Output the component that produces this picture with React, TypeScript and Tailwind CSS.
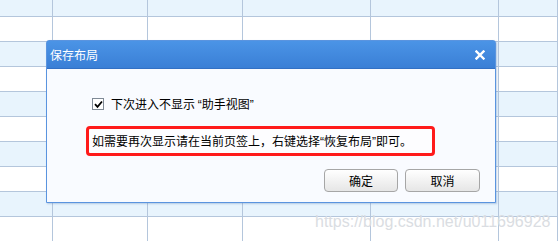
import React from 'react';

const cols = [53, 95, 95, 128, 128, 59];
const rowHeights = [17, 25, 25, 25, 25, 25, 25, 25, 25, 25];

function Grid() {
  return (
    <div className="flex flex-col">
      {rowHeights.map((h, r) => (
        <div
          key={r}
          className={`flex border-b border-[#b4c6dc] ${r % 2 === 0 ? 'bg-[#e8f4fd]' : 'bg-white'}`}
          style={{ height: h }}
        >
          {cols.map((w, c) => (
            <div key={c} className="border-r border-[#b4c6dc] shrink-0" style={{ width: w }} />
          ))}
        </div>
      ))}
    </div>
  );
}

function Checkbox() {
  return (
    <div className="w-[12px] h-[12px] border border-[#7f8a96] bg-white flex items-center justify-center">
      <svg width="9" height="9" viewBox="0 0 9 9">
        <path d="M1 4.2 L3.5 6.8 L8 1.5" fill="none" stroke="#000" strokeWidth="1.8" />
      </svg>
    </div>
  );
}

// narrow (western) quote marks, as in the original
function Q({ c }: { c: string }) {
  return <span style={{ fontFamily: '"Liberation Sans", sans-serif' }}>{c}</span>;
}

function Dialog() {
  return (
    <div className="absolute left-[46px] top-[40px] w-[450px] h-[163px] flex flex-col border border-[#5a94df] rounded-t-[3px] bg-[#f9fbff] shadow-[1px_1px_2px_rgba(80,120,180,0.35)]">
      <div className="h-[28px] shrink-0 flex items-center justify-between pl-[3px] pr-[10px] bg-gradient-to-b from-[#4b94e6] to-[#3a7fd6] border-b border-[#3270c4]">
        <span className="text-white text-[12px] leading-none">保存布局</span>
        <svg width="10" height="10" viewBox="0 0 10 10">
          <path d="M1.5 1.5 L8.5 8.5 M8.5 1.5 L1.5 8.5" stroke="#fff" strokeWidth="2.4" strokeLinecap="square" />
        </svg>
      </div>
      <div className="flex flex-col pt-[27px] pl-[39px] pr-[15px]">
        <div className="h-[16px] flex items-center gap-[7px] ml-[6px]">
          <Checkbox />
          <span className="text-[12px] text-black leading-none">
            下次进入不显示 <Q c="“" />助手视图<Q c="”" />
          </span>
        </div>
        <div className="mt-[14px] w-[349px] h-[30px] border-[3px] border-[#ff1a1a] rounded-[4px] bg-[#fdfdff] flex items-center pl-[3px]">
          <span className="text-[12px] text-black leading-none">
            如需要再次显示请在当前页签上，右键选择<Q c="“" />恢复布局<Q c="”" />即可。
          </span>
        </div>
        <div className="mt-[13px] flex justify-end gap-[7px]">
          <button className="w-[74px] h-[23px] rounded-[4px] border border-[#a6a6a6] bg-gradient-to-b from-white to-[#e6e6e6] text-[12px] text-black">
            确定
          </button>
          <button className="w-[75px] h-[23px] rounded-[4px] border border-[#a6a6a6] bg-gradient-to-b from-white to-[#e6e6e6] text-[12px] text-black">
            取消
          </button>
        </div>
      </div>
    </div>
  );
}

export default function App() {
  return (
    <div
      className="relative w-[558px] h-[241px] overflow-hidden bg-white"
      style={{ fontFamily: '"Noto Sans CJK SC", "Liberation Sans", sans-serif' }}
    >
      <Grid />
      <Dialog />
      <span
        className="absolute left-[315px] top-[214px] text-[16px] text-[#dadde2] leading-none"
        style={{ fontFamily: '"Liberation Sans", Arial, sans-serif' }}
      >
        https://blog.csdn.net/u011696928
      </span>
    </div>
  );
}
